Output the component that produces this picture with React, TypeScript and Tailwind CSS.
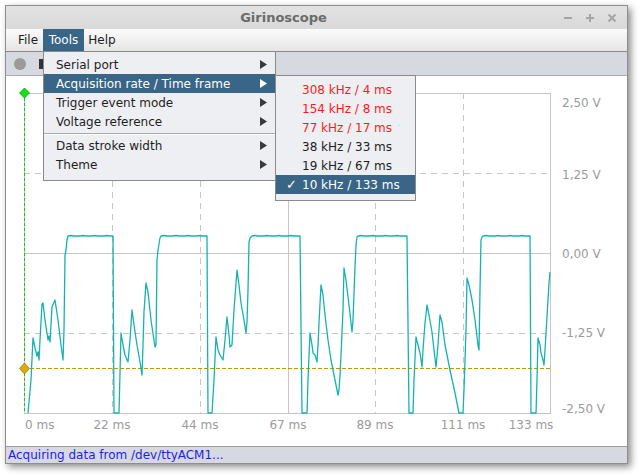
import React from 'react';

type Pt = [number, number];

const HIGH = 236;
const LOW = 413;

// flat top with a little noise, like the real trace
function high(x0: number, x1: number): Pt[] {
  const out: Pt[] = [];
  for (let x = x0 + 3, i = 0; x < x1; x += 3, i++) {
    out.push([x, HIGH + (((i * 5) % 4) === 0 ? -0.5 : 0)]);
  }
  return out;
}

const points: Pt[] = [
  [28, 413], [31, 380], [33, 338], [35, 348], [37, 356], [38, 352], [39, 360], [40, 340], [42, 304], [43, 303],
  [45, 320], [48, 340], [49, 336], [50, 342], [52, 307], [54, 302], [55, 300], [58, 320], [61, 345], [63, 360],
  [64, 330], [65, 255], [66, 250], [67, 240], [68, HIGH],
  ...high(68, 113),
  [113, HIGH], [114, LOW], [119, LOW], [121, 333], [123, 345], [125, 355], [127, 360], [128, 362], [130, 340],
  [132, 310], [134, 325], [137, 345], [140, 362], [142, 375], [143, 345], [144, 312], [146, 283], [148, 292],
  [151, 320], [155, 347], [156, 345], [157, 260], [158, 250], [160, 238], [161, HIGH],
  ...high(161, 207),
  [207, HIGH], [208, LOW], [212, LOW], [214, 380], [216, 337], [218, 350], [220, 355], [223, 360], [225, 340],
  [227, 317], [229, 335], [230, 347], [232, 345], [234, 310], [237, 270], [239, 285], [241, 303], [244, 320],
  [246, 333], [247, 322], [248, 290], [249, 242], [250, 238], [252, HIGH],
  ...high(252, 300),
  [300, HIGH], [302, LOW], [307, LOW], [308, 380], [310, 333], [312, 345], [313, 353], [315, 355], [317, 362],
  [318, 345], [319, 323], [321, 285], [323, 295], [325, 315], [328, 340], [331, 360], [335, 380], [338, 395],
  [339, 390], [340, 375], [341, 355], [343, 310], [344, 268], [346, 280], [349, 305], [352, 332], [353, 320],
  [355, 267], [356, 245], [357, 237], [358, HIGH],
  ...high(358, 407),
  [407, HIGH], [409, LOW], [413, LOW], [414, 380], [416, 337], [418, 345], [420, 353], [422, 367], [423, 350],
  [425, 323], [427, 305], [429, 315], [432, 332], [434, 350], [436, 367], [438, 345], [440, 315], [442, 322],
  [445, 345], [450, 370], [455, 393], [458, 408], [459, LOW], [463, LOW], [464, 390], [466, 330], [467, 278],
  [469, 285], [472, 300], [475, 320], [477, 337], [478, 345], [479, 350], [480, 290], [481, 240], [482, 237],
  [483, HIGH],
  ...high(483, 530),
  [530, HIGH], [531, LOW], [536, LOW], [537, 380], [538, 338], [540, 345], [541, 353], [543, 360], [544, 365],
  [545, 350], [546, 333], [548, 300], [549, 283], [550, 272],
];

const signalPath = points.map(([x, y], i) => `${i === 0 ? 'M' : 'L'}${x} ${y}`).join(' ');

const voltLabels = [
  { text: '2,50 V', y: 107 },
  { text: '1,25 V', y: 179 },
  { text: '0,00 V', y: 258 },
  { text: '-1,25 V', y: 337 },
  { text: '-2,50 V', y: 413 },
];

const timeLabels = [
  { text: '0 ms', x: 25, anchor: 'start' },
  { text: '22 ms', x: 112, anchor: 'middle' },
  { text: '44 ms', x: 200, anchor: 'middle' },
  { text: '67 ms', x: 288, anchor: 'middle' },
  { text: '89 ms', x: 375, anchor: 'middle' },
  { text: '111 ms', x: 463, anchor: 'middle' },
  { text: '133 ms', x: 531, anchor: 'middle' },
];

const toolsItems = [
  { label: 'Serial port' },
  { label: 'Acquisition rate / Time frame', active: true },
  { label: 'Trigger event mode' },
  { label: 'Voltage reference', sepAfter: true },
  { label: 'Data stroke width' },
  { label: 'Theme' },
];

const rates = [
  { label: '308 kHz / 4 ms', red: true },
  { label: '154 kHz / 8 ms', red: true },
  { label: '77 kHz / 17 ms', red: true },
  { label: '38 kHz / 33 ms' },
  { label: '19 kHz / 67 ms' },
  { label: '10 kHz / 133 ms', checked: true },
];

function Arrow({ white }: { white?: boolean }) {
  return (
    <svg width="7" height="9" viewBox="0 0 7 9">
      <polygon points="0,0 7,4.5 0,9" fill={white ? '#ffffff' : '#3a3a3a'} />
    </svg>
  );
}

function Plot() {
  const grid = '#c6c6c6';
  return (
    <svg className="block w-full h-full" viewBox="6 76 621 370">
      {/* dashed grid */}
      {[112, 200, 375, 463].map((x) => (
        <line key={x} x1={x + 0.5} y1={93} x2={x + 0.5} y2={413} stroke={grid} strokeDasharray="6 5" />
      ))}
      {[173, 333].map((y) => (
        <line key={y} x1={24} y1={y + 0.5} x2={550} y2={y + 0.5} stroke={grid} strokeDasharray="6 5" />
      ))}
      {/* solid grid */}
      <line x1={288.5} y1={93} x2={288.5} y2={413} stroke={grid} />
      <line x1={24} y1={253.5} x2={550} y2={253.5} stroke={grid} />
      <rect x={24.5} y={93.5} width={526} height={320} fill="none" stroke={grid} />

      {/* trigger level */}
      <line x1={24} y1={368.5} x2={550} y2={368.5} stroke="#c39300" strokeDasharray="4 2" />

      {/* signal */}
      <path d={signalPath} fill="none" stroke="#16b2b2" strokeWidth={1.3} strokeLinejoin="round" />

      {/* trigger time */}
      <line x1={24.5} y1={93} x2={24.5} y2={413} stroke="#19c219" strokeDasharray="3 2" />
      <polygon points="24.5,88 29.5,93 24.5,98 19.5,93" fill="#16e016" stroke="#0aa20a" strokeWidth={0.8} />
      <polygon points="24.5,363 29.5,368.5 24.5,374 19.5,368.5" fill="#d9ad12" stroke="#a07a00" strokeWidth={0.8} />

      {voltLabels.map((l) => (
        <text key={l.text} x={562} y={l.y} fontSize={12} fill="#9b9b9b" fontFamily="DejaVu Sans, sans-serif">
          {l.text}
        </text>
      ))}
      {timeLabels.map((l) => (
        <text
          key={l.text}
          x={l.x}
          y={429}
          fontSize={12}
          fill="#9b9b9b"
          textAnchor={l.anchor as 'start' | 'middle'}
          fontFamily="DejaVu Sans, sans-serif"
        >
          {l.text}
        </text>
      ))}
    </svg>
  );
}

function WinButton({ kind }: { kind: 'min' | 'max' | 'close' }) {
  return (
    <svg width="10" height="10" viewBox="0 0 10 10" className="block">
      {kind === 'min' && <line x1="1" y1="5" x2="9" y2="5" stroke="#a4a4a4" strokeWidth="2" />}
      {kind === 'max' && (
        <>
          <line x1="1" y1="5" x2="9" y2="5" stroke="#a4a4a4" strokeWidth="2" />
          <line x1="5" y1="1" x2="5" y2="9" stroke="#a4a4a4" strokeWidth="2" />
        </>
      )}
      {kind === 'close' && (
        <>
          <line x1="1.5" y1="1.5" x2="8.5" y2="8.5" stroke="#a4a4a4" strokeWidth="2" />
          <line x1="8.5" y1="1.5" x2="1.5" y2="8.5" stroke="#a4a4a4" strokeWidth="2" />
        </>
      )}
    </svg>
  );
}

export default function App() {
  return (
    <div className="relative w-[639px] h-[474px] bg-white overflow-hidden font-['DejaVu_Sans',sans-serif] text-[12px]">
      <div className="ml-[5px] mt-[5px] w-[623px] h-[459px] border border-[#8e8e8e] flex flex-col shadow-[3px_3px_7px_rgba(0,0,0,0.45)]">
        {/* title bar */}
        <div className="h-[23px] flex items-center bg-gradient-to-b from-[#e2e2e2] to-[#d9d9d9]">
          <div className="w-[555px] text-center font-bold text-[13px] text-[#6b6b6b]">Girinoscope</div>
          <div className="flex items-center gap-[12px] ml-[2px]">
            <WinButton kind="min" />
            <WinButton kind="max" />
            <WinButton kind="close" />
          </div>
        </div>

        {/* menu bar */}
        <div className="h-[23px] flex items-stretch pl-[7px] border-b border-[#8a8a8a] bg-gradient-to-b from-[#fbfbfb] to-[#e5e5e5] text-[#1e1e1e]">
          <div className="w-[30px] flex items-center justify-center">File</div>
          <div className="w-[41px] flex items-center justify-center bg-[#396587] text-white">Tools</div>
          <div className="w-[36px] flex items-center justify-center">Help</div>
        </div>

        {/* tool bar */}
        <div className="h-[24px] flex items-center gap-[13px] pl-[8px] bg-[#d6d9df] border-b border-[#a9abb0]">
          <div className="w-[12px] h-[12px] rounded-full bg-[#9a9a9a]" />
          <div className="w-[10px] h-[10px] bg-[#333333]" />
        </div>

        {/* plot */}
        <div className="flex-1 bg-white">
          <Plot />
        </div>

        {/* status bar */}
        <div className="h-[17px] flex items-center pl-[2px] border-t border-[#9c9ca6] bg-[#d6d9df] text-[#1f1fe6]">
          Acquiring data from /dev/ttyACM1...
        </div>
      </div>

      {/* Tools menu */}
      <div className="absolute left-[43px] top-[51px] w-[233px] h-[130px] bg-[#eeeff3] border border-[#8a8a8a] pt-[3px] text-[#1e1e1e]">
        {toolsItems.map((it) => (
          <React.Fragment key={it.label}>
            <div
              className={`h-[19px] flex items-center justify-between pl-[12px] pr-[8px] ${
                it.active ? 'bg-[#396587] text-white' : ''
              }`}
            >
              <span>{it.label}</span>
              <Arrow white={it.active} />
            </div>
            {it.sepAfter && (
              <div className="h-[5px] flex flex-col justify-center">
                <div className="h-px bg-[#a7a8ac]" />
                <div className="h-px bg-white" />
              </div>
            )}
          </React.Fragment>
        ))}
      </div>

      {/* rate submenu */}
      <div className="absolute left-[275px] top-[75px] w-[141px] h-[126px] bg-[#eeeff3] border border-[#8a8a8a] pt-[4px]">
        {rates.map((r) => (
          <div
            key={r.label}
            className={`h-[19px] flex items-center pl-[10px] ${
              r.checked ? 'bg-[#396587] text-white' : r.red ? 'text-[#ff1a1a]' : 'text-[#1e1e1e]'
            }`}
          >
            <span className="w-[16px] text-[13px] font-bold">{r.checked ? '✓' : ''}</span>
            <span>{r.label}</span>
          </div>
        ))}
      </div>
    </div>
  );
}
